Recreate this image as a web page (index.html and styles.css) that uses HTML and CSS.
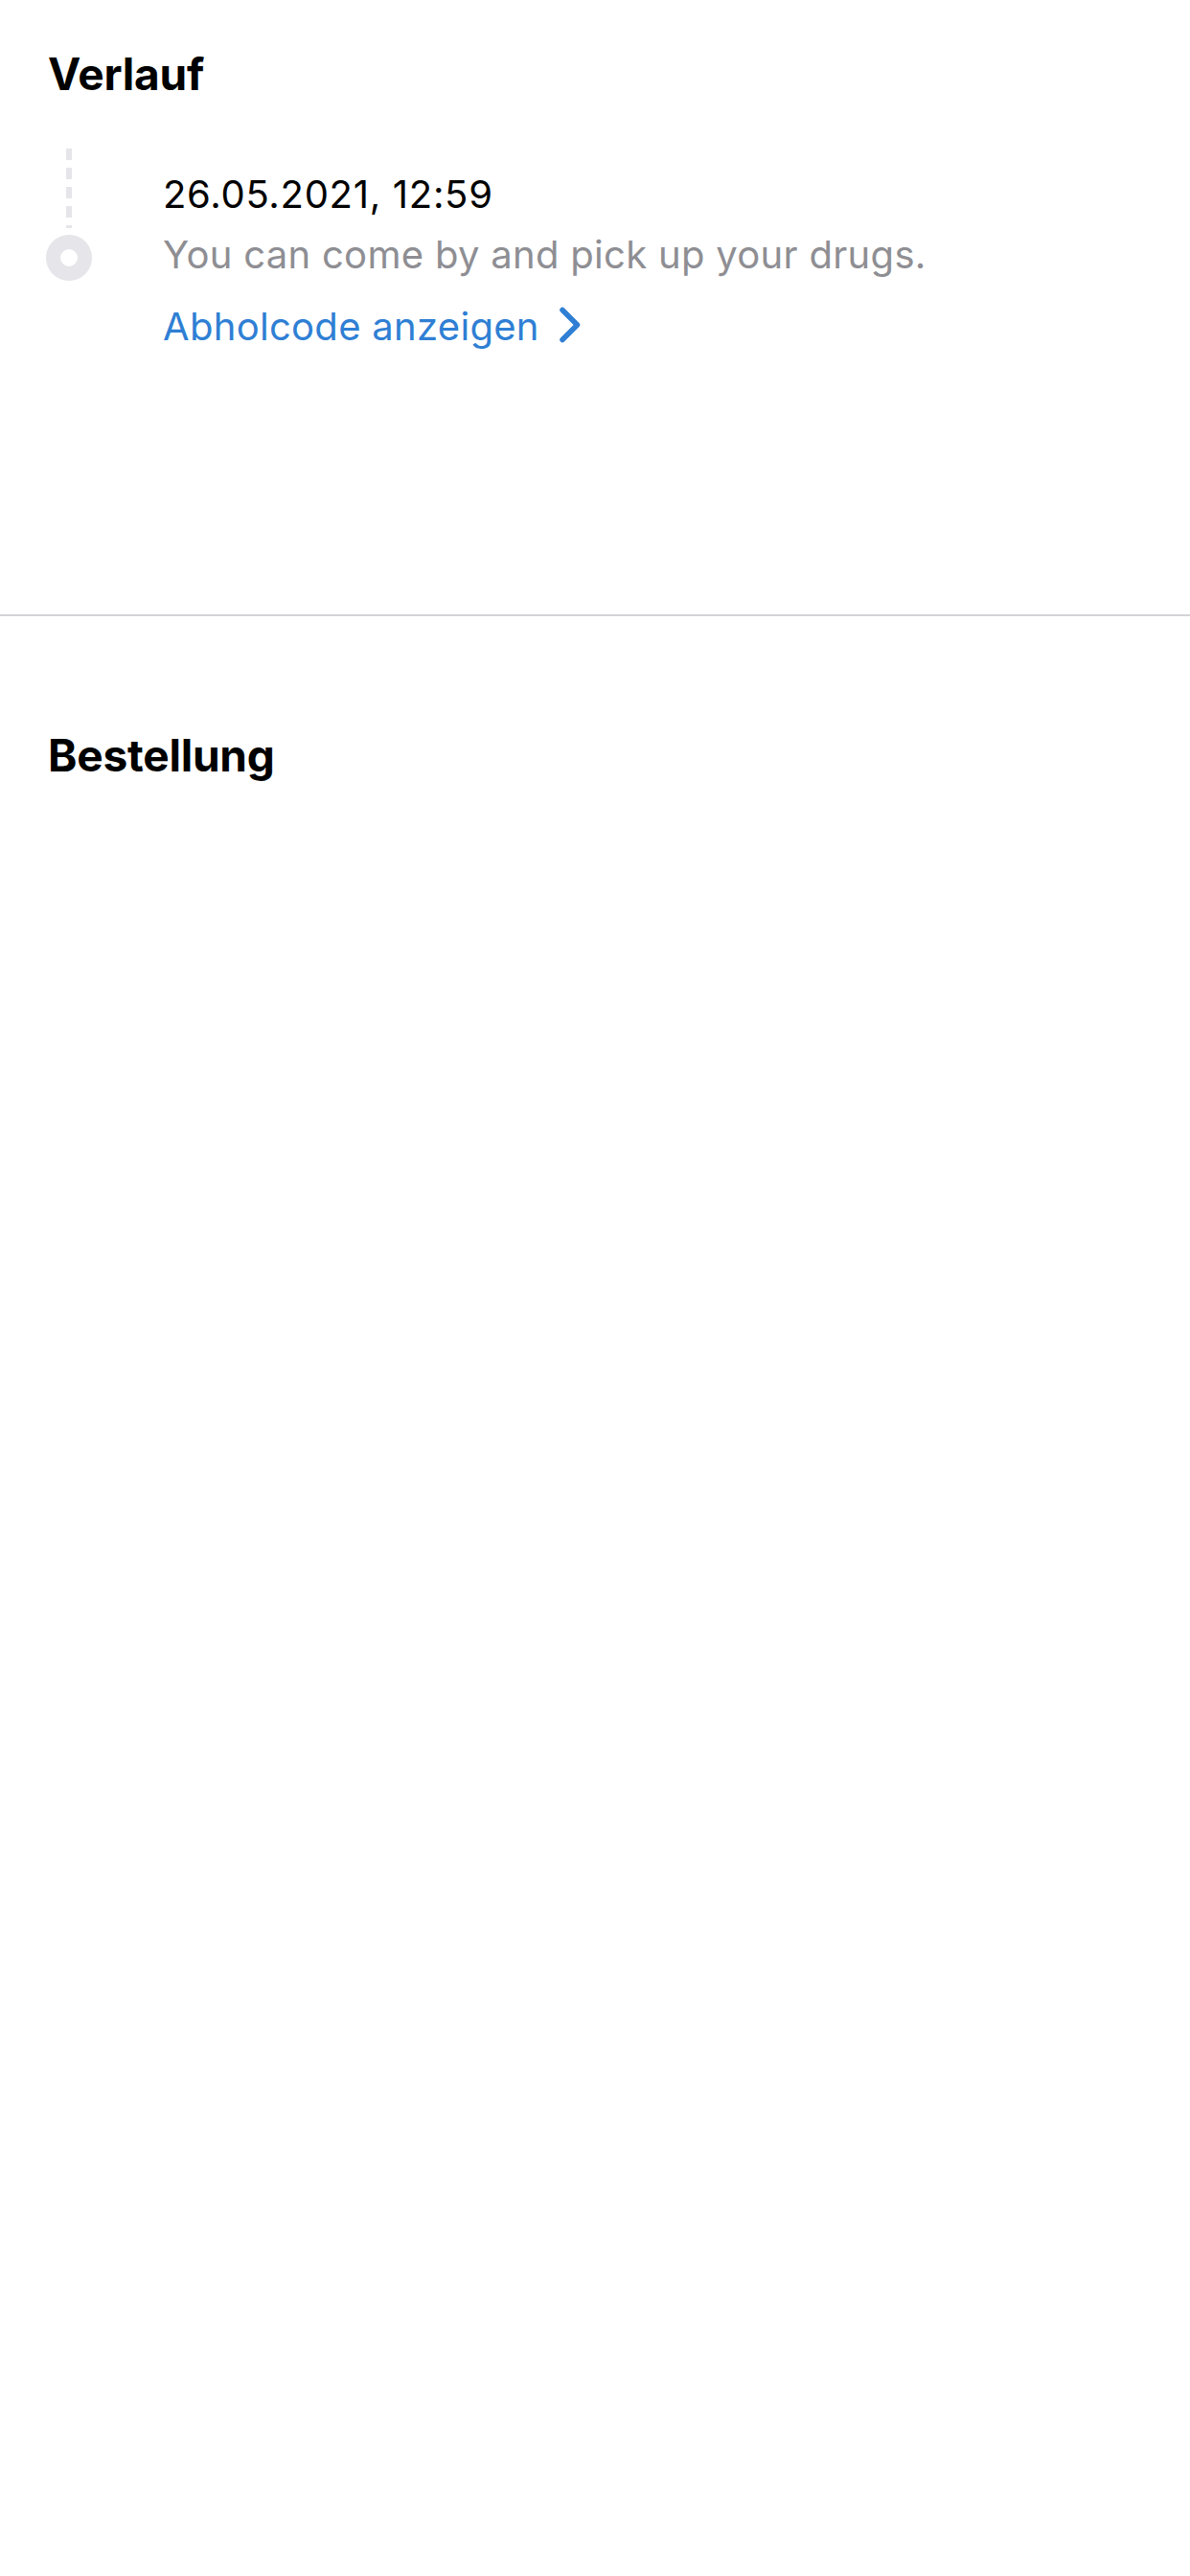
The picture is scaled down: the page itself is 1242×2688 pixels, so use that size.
FILE: index.html
```html
<!DOCTYPE html>
<html lang="de">
<head>
<meta charset="utf-8">
<title>Verlauf</title>
<link rel="stylesheet" href="styles.css">
</head>
<body>
  <section class="history">
    <h2 class="section-title">Verlauf</h2>
    <div class="timeline-item">
      <div class="rail">
        <div class="rail-dash"></div>
        <div class="rail-dot"></div>
      </div>
      <div class="entry">
        <div class="entry-date">26.05.2021, 12:59</div>
        <div class="entry-text">You can come by and pick up your drugs.</div>
        <a class="entry-link" href="#">
          <span>Abholcode anzeigen</span>
          <svg class="chevron" width="24" height="38" viewBox="0 0 24 38" aria-hidden="true">
            <polyline points="4,3.5 19.5,19 4,34.5" fill="none" stroke="currentColor" stroke-width="5.5" stroke-linecap="round" stroke-linejoin="round"/>
          </svg>
        </a>
      </div>
    </div>
  </section>
  <hr class="divider">
  <section class="order">
    <h2 class="section-title">Bestellung</h2>
  </section>
</body>
</html>
```

FILE: styles.css
```css
html, body {
  margin: 0;
  padding: 0;
  background: #ffffff;
}

body {
  width: 1242px;
  min-height: 2688px;
  font-family: Inter, "Noto Sans", "Liberation Sans", sans-serif;
  color: #000000;
}

.section-title {
  margin: 0;
  padding-left: 50px;
  font-size: 46px;
  line-height: 56px;
  font-weight: 700;
  letter-spacing: -0.2px;
}

.history {
  padding-top: 49px;
  height: 641px;
  box-sizing: border-box;
}

.timeline-item {
  display: flex;
  margin-top: 50px;
  gap: 74px;
}

.rail {
  margin-left: 48px;
  width: 48px;
  display: flex;
  flex-direction: column;
  align-items: center;
}

.rail-dash {
  width: 6px;
  height: 83px;
  background: repeating-linear-gradient(to bottom, #e5e5ea 0 12px, transparent 12px 20px);
}

.rail-dot {
  margin-top: 7px;
  width: 48px;
  height: 48px;
  box-sizing: border-box;
  border-radius: 50%;
  border: 15px solid #e5e5ea;
  background: #ffffff;
}

.entry {
  padding-top: 16px;
  display: flex;
  flex-direction: column;
  align-items: flex-start;
}

.entry-date {
  font-size: 40px;
  line-height: 63px;
  letter-spacing: 0.7px;
  color: #000000;
}

.entry-text {
  font-size: 40px;
  line-height: 63px;
  letter-spacing: 0.3px;
  color: #8e8e93;
}

.entry-link {
  margin-top: 6px;
  display: flex;
  align-items: center;
  gap: 20px;
  font-size: 40px;
  line-height: 75px;
  letter-spacing: 0.3px;
  color: #2f7fd4;
  text-decoration: none;
}

.chevron {
  display: block;
  margin-top: -4px;
}

.divider {
  margin: 0;
  border: 0;
  height: 2px;
  background: #d4d4d8;
}

.order {
  padding-top: 117px;
}
```
